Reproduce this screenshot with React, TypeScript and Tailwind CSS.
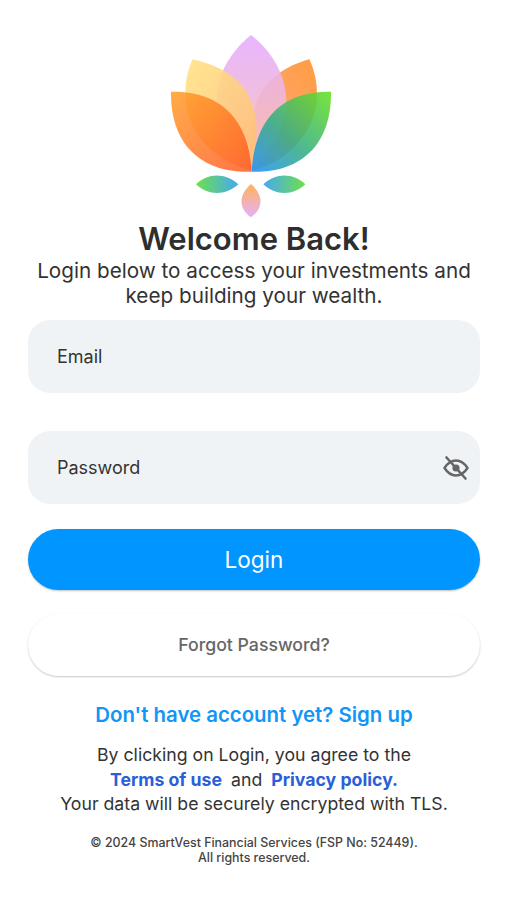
function Logo() {
  return (
    <svg className="w-[200px] h-[210px] mr-[7px]" viewBox="0 0 600 630" aria-hidden="true">
      <defs>
        <linearGradient id="pink" x1="0" y1="0" x2="0" y2="1">
          <stop offset="0" stopColor="#e6aeff" />
          <stop offset="0.5" stopColor="#efb8d8" />
          <stop offset="1" stopColor="#ffc59a" />
        </linearGradient>
        <linearGradient id="yellow" x1="0" y1="0" x2="1" y2="1">
          <stop offset="0" stopColor="#ffe486" />
          <stop offset="1" stopColor="#ffbb78" />
        </linearGradient>
        <linearGradient id="backOrange" x1="1" y1="0" x2="0" y2="1">
          <stop offset="0" stopColor="#ff9d40" />
          <stop offset="1" stopColor="#ffa98a" />
        </linearGradient>
        <linearGradient id="leftFront" x1="0" y1="0" x2="1" y2="1">
          <stop offset="0" stopColor="#ff9a20" />
          <stop offset="1" stopColor="#ff5520" />
        </linearGradient>
        <linearGradient id="rightFront" x1="1" y1="0" x2="0" y2="1">
          <stop offset="0" stopColor="#66e020" />
          <stop offset="0.55" stopColor="#35ad85" />
          <stop offset="1" stopColor="#2290f8" />
        </linearGradient>
        <linearGradient id="leafL" x1="0" y1="0" x2="1" y2="0">
          <stop offset="0" stopColor="#6fe04a" />
          <stop offset="1" stopColor="#45a8f5" />
        </linearGradient>
        <linearGradient id="leafR" x1="1" y1="0" x2="0" y2="0">
          <stop offset="0" stopColor="#6fe04a" />
          <stop offset="1" stopColor="#45a8f5" />
        </linearGradient>
        <linearGradient id="leafB" x1="0" y1="0" x2="0" y2="1">
          <stop offset="0" stopColor="#ffb35c" />
          <stop offset="1" stopColor="#e6b0fb" />
        </linearGradient>
      </defs>
      <path d="M475 118 C430 130 340 165 312 260 C296 330 298 400 302 452 C400 430 500 340 498 220 C498 180 488 145 475 118Z" fill="url(#backOrange)" />
      <path d="M300 45 C352 85 402 150 406 240 C408 330 340 410 302 450 C260 410 195 330 197 235 C200 150 250 85 300 45Z" fill="url(#pink)" fillOpacity="0.9" />
      <path d="M125 118 C200 135 300 175 315 300 C320 360 308 420 302 452 C200 430 100 340 103 220 C103 180 112 145 125 118Z" fill="url(#yellow)" fillOpacity="0.9" />
      <path d="M60 215 C180 212 292 270 302 455 C180 460 58 400 60 215Z" fill="url(#leftFront)" fillOpacity="0.82" />
      <path d="M540 215 C420 212 312 270 302 455 C420 460 542 400 540 215Z" fill="url(#rightFront)" fillOpacity="0.88" />
      <path d="M135 493 C170 458 225 458 262 493 C225 528 170 528 135 493Z" fill="url(#leafL)" />
      <path d="M463 493 C428 458 373 458 337 493 C373 528 428 528 463 493Z" fill="url(#leafR)" />
      <path d="M300 492 C338 525 338 565 300 592 C262 565 262 525 300 492Z" fill="url(#leafB)" />
    </svg>
  );
}

function EyeSlash() {
  return (
    <svg className="w-[26px] h-[26px] text-[#666]" viewBox="0 0 26 26" fill="none" stroke="currentColor" aria-hidden="true">
      <path d="M1.5 13 C5 7.5 9 5.5 13 5.5 C17 5.5 21 7.5 24.5 13 C21 18.5 17 20.5 13 20.5 C9 20.5 5 18.5 1.5 13Z" strokeWidth="2.4" />
      <circle cx="13" cy="13" r="3.6" fill="currentColor" stroke="none" />
      <path d="M3.5 2.5 L22.5 23.5" strokeWidth="2.6" strokeLinecap="round" />
    </svg>
  );
}

export default function App() {
  return (
    <div className="min-h-[900px] bg-white flex flex-col items-center pl-[28px] pr-[27px] pt-[20px] font-['Inter','Liberation_Sans',sans-serif] text-[#333]">
      <Logo />
      <h1 className="mt-[-9px] text-[31px] leading-[36px] font-semibold text-[#2e2e2e]">Welcome Back!</h1>
      <p className="mt-[1px] text-center text-[20.7px] leading-[25px] text-[#333]">
        Login below to access your investments and<br />keep building your wealth.
      </p>

      <div className="mt-[12px] w-full flex flex-col">
        <div className="h-[73px] rounded-[22px] bg-[#f0f3f6] flex items-center pl-[29px] text-[18px] text-[#333]">Email</div>
        <div className="mt-[38px] h-[73px] rounded-[22px] bg-[#f0f3f6] flex items-center justify-between pl-[29px] pr-[11px] text-[18px] text-[#333]">
          Password
          <EyeSlash />
        </div>
        <button className="mt-[25px] h-[61px] rounded-full bg-[#0095ff] text-white text-[22.5px] pt-[1px] shadow-[0_1px_2px_rgba(0,0,0,0.25)]">Login</button>
        <button className="mt-[24px] h-[62px] rounded-full bg-white text-[#666] text-[17.7px] pt-[1px] font-medium shadow-[0_1px_2px_rgba(0,0,0,0.22)]">Forgot Password?</button>
      </div>

      <p className="mt-[25px] text-[20.4px] leading-[28px] font-semibold text-[#1296f5]">Don't have account yet? Sign up</p>

      <div className="mt-[13px] text-center text-[17.7px] leading-[26px] text-[#333]">
        <p>By clicking on Login, you agree to the</p>
        <p className="leading-[24px]">
          <span className="font-bold text-[#2b5fd9]">Terms of use</span>
          <span className="mx-[9px]">and</span>
          <span className="font-bold text-[#2b5fd9]">Privacy policy.</span>
        </p>
        <p className="leading-[23px]">Your data will be securely encrypted with TLS.</p>
      </div>

      <p className="mt-[20px] text-center text-[12.4px] leading-[15px] font-medium text-[#444]">
        © 2024 SmartVest Financial Services (FSP No: 52449).<br />All rights reserved.
      </p>
    </div>
  );
}
